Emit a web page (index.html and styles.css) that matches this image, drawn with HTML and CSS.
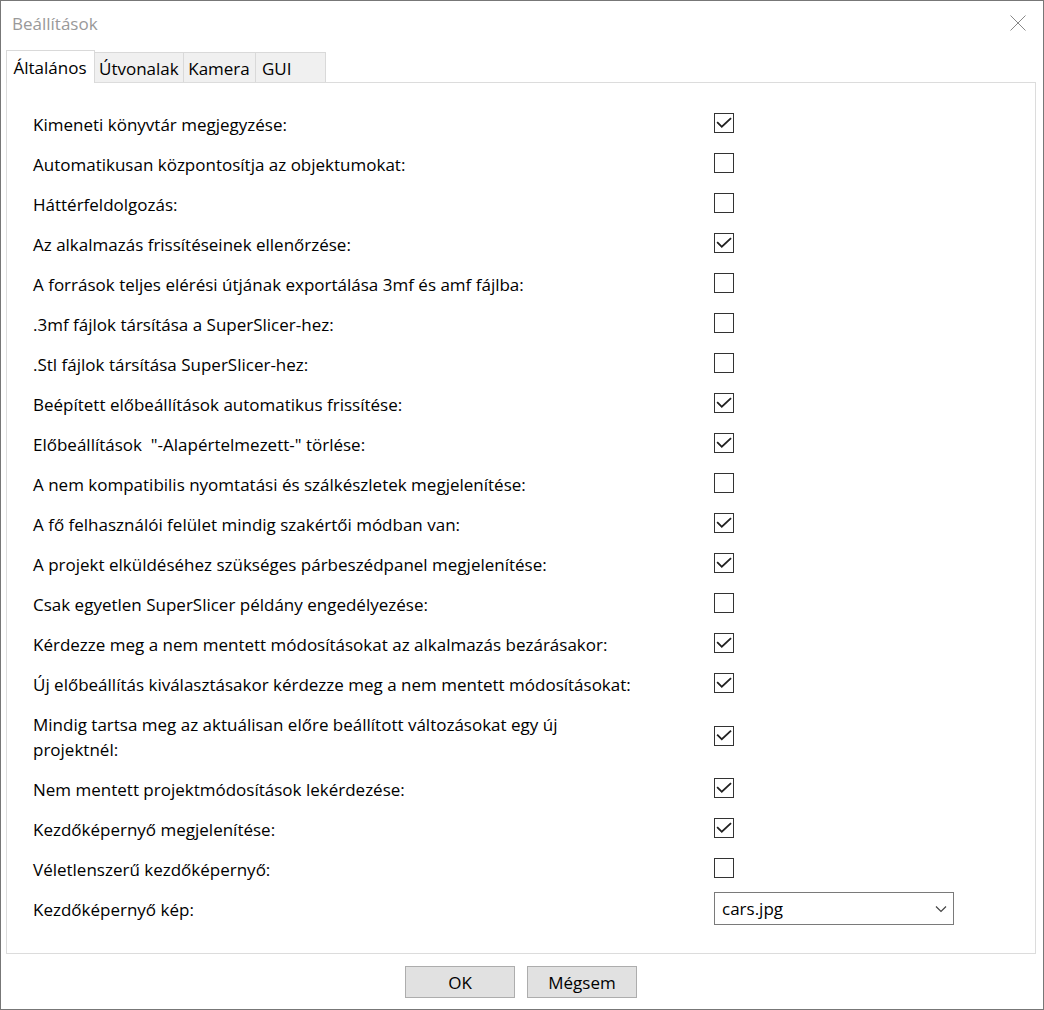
FILE: index.html
```html
<!DOCTYPE html>
<html lang="hu">
<head>
<meta charset="utf-8">
<title>Beállítások</title>
<link rel="stylesheet" href="styles.css">
</head>
<body>
<main class="dialog">
  <header class="titlebar">
    <h1 class="title">Beállítások</h1>
    <button class="close" type="button" aria-label="Bezárás"><svg width="16" height="16" viewBox="0 0 16 16"><path d="M.5 .5l15 15M15.5 .5l-15 15" fill="none" stroke="#888"/></svg></button>
  </header>
  <nav class="tabs" role="tablist">
    <button class="tab tab-active" type="button" role="tab" aria-selected="true">Általános</button>
    <button class="tab" type="button" role="tab">Útvonalak</button>
    <button class="tab" type="button" role="tab">Kamera</button>
    <button class="tab tab-last" type="button" role="tab">GUI</button>
  </nav>
  <form class="panel" id="settings">
    <div class="row"><label class="label" for="s1">Kimeneti könyvtár megjegyzése:</label><input class="check" type="checkbox" id="s1" checked></div>
    <div class="row"><label class="label" for="s2">Automatikusan központosítja az objektumokat:</label><input class="check" type="checkbox" id="s2"></div>
    <div class="row"><label class="label" for="s3">Háttérfeldolgozás:</label><input class="check" type="checkbox" id="s3"></div>
    <div class="row"><label class="label" for="s4">Az alkalmazás frissítéseinek ellenőrzése:</label><input class="check" type="checkbox" id="s4" checked></div>
    <div class="row"><label class="label" for="s5">A források teljes elérési útjának exportálása 3mf és amf fájlba:</label><input class="check" type="checkbox" id="s5"></div>
    <div class="row"><label class="label" for="s6">.3mf fájlok társítása a SuperSlicer-hez:</label><input class="check" type="checkbox" id="s6"></div>
    <div class="row"><label class="label" for="s7">.Stl fájlok társítása SuperSlicer-hez:</label><input class="check" type="checkbox" id="s7"></div>
    <div class="row"><label class="label" for="s8">Beépített előbeállítások automatikus frissítése:</label><input class="check" type="checkbox" id="s8" checked></div>
    <div class="row"><label class="label" for="s9">Előbeállítások &nbsp;"-Alapértelmezett-" törlése:</label><input class="check" type="checkbox" id="s9" checked></div>
    <div class="row"><label class="label" for="s10">A nem kompatibilis nyomtatási és szálkészletek megjelenítése:</label><input class="check" type="checkbox" id="s10"></div>
    <div class="row"><label class="label" for="s11">A fő felhasználói felület mindig szakértői módban van:</label><input class="check" type="checkbox" id="s11" checked></div>
    <div class="row"><label class="label" for="s12">A projekt elküldéséhez szükséges párbeszédpanel megjelenítése:</label><input class="check" type="checkbox" id="s12" checked></div>
    <div class="row"><label class="label" for="s13">Csak egyetlen SuperSlicer példány engedélyezése:</label><input class="check" type="checkbox" id="s13"></div>
    <div class="row"><label class="label" for="s14">Kérdezze meg a nem mentett módosításokat az alkalmazás bezárásakor:</label><input class="check" type="checkbox" id="s14" checked></div>
    <div class="row"><label class="label" for="s15">Új előbeállítás kiválasztásakor kérdezze meg a nem mentett módosításokat:</label><input class="check" type="checkbox" id="s15" checked></div>
    <div class="row"><label class="label" for="s16">Mindig tartsa meg az aktuálisan előre beállított változásokat egy új<br>projektnél:</label><input class="check" type="checkbox" id="s16" checked></div>
    <div class="row"><label class="label" for="s17">Nem mentett projektmódosítások lekérdezése:</label><input class="check" type="checkbox" id="s17" checked></div>
    <div class="row"><label class="label" for="s18">Kezdőképernyő megjelenítése:</label><input class="check" type="checkbox" id="s18" checked></div>
    <div class="row"><label class="label" for="s19">Véletlenszerű kezdőképernyő:</label><input class="check" type="checkbox" id="s19"></div>
    <div class="row">
      <label class="label" for="s20">Kezdőképernyő kép:</label>
      <div class="combo">
        <select class="select" id="s20"><option>cars.jpg</option></select>
        <svg class="chevron" width="12" height="8" viewBox="0 0 12 8" aria-hidden="true"><path d="M1 1.500l5 5 5-5" fill="none" stroke="#444" stroke-width="1.200"/></svg>
      </div>
    </div>
  </form>
  <footer class="actions">
    <button class="button" type="submit" form="settings">OK</button>
    <button class="button" type="button">Mégsem</button>
  </footer>
</main>
</body>
</html>
```
FILE: styles.css
```css
* { box-sizing: border-box; }
body { margin: 0; background: #fff; color: #000; }
body, button, select { font-family: "Segoe UI", "Open Sans", "Noto Sans", sans-serif; font-size: 17px; }
.dialog { display: flex; flex-direction: column; min-height: 100vh; padding: 0 7px 11px 5px; border: 1px solid #777; }
.titlebar { display: flex; align-items: center; justify-content: space-between; height: 44px; padding: 0 10px 0 6px; }
.title { margin: 0; font-size: 17px; font-weight: 400; color: #999; }
.close { display: flex; padding: 0; border: 0; background: none; }
.tabs { display: flex; align-items: flex-end; height: 37px; }
.tab { height: 30px; padding: 2px 5px 0 4px; border: 1px solid #d9d9d9; border-width: 1px 1px 0 0; background: #f0f0f0; color: #000; white-space: nowrap; }
.tab:nth-child(2) { width: 89px; }
.tab:nth-child(3) { width: 72px; }
.tab-active { width: 89px; height: 33px; padding-top: 0; border-left-width: 1px; background: #fff; margin-bottom: -1px; z-index: 1; }
.tab-last { width: 70px; padding-left: 6px; text-align: left; }
.panel { flex: 1; padding: 20px 26px; border: 1px solid #dcdcdc; }
.row { display: grid; grid-template-columns: 681px 240px; align-items: center; min-height: 40px; }
.label { line-height: 25px; padding: 9px 0 6px; }
.check { appearance: none; display: grid; place-items: center; width: 20px; height: 20px; margin: 0; border: 1px solid #333; background: #fff; }
.check:checked::before { content: ""; width: 16px; height: 12px; background: #222; clip-path: polygon(3% 47%, 11% 38%, 36% 71%, 90% 4%, 98% 14%, 36% 92%); }
.combo { position: relative; }
.select { appearance: none; display: block; width: 100%; height: 33px; padding: 0 30px 0 7px; border: 1px solid #7a7a7a; border-radius: 0; background: #fff; color: #000; }
.chevron { position: absolute; top: 13px; right: 7px; pointer-events: none; }
.actions { display: flex; justify-content: center; gap: 12px; padding-top: 12px; }
.button { width: 110px; height: 32px; padding: 0; border: 1px solid #adadad; background: #e1e1e1; color: #000; }
```
